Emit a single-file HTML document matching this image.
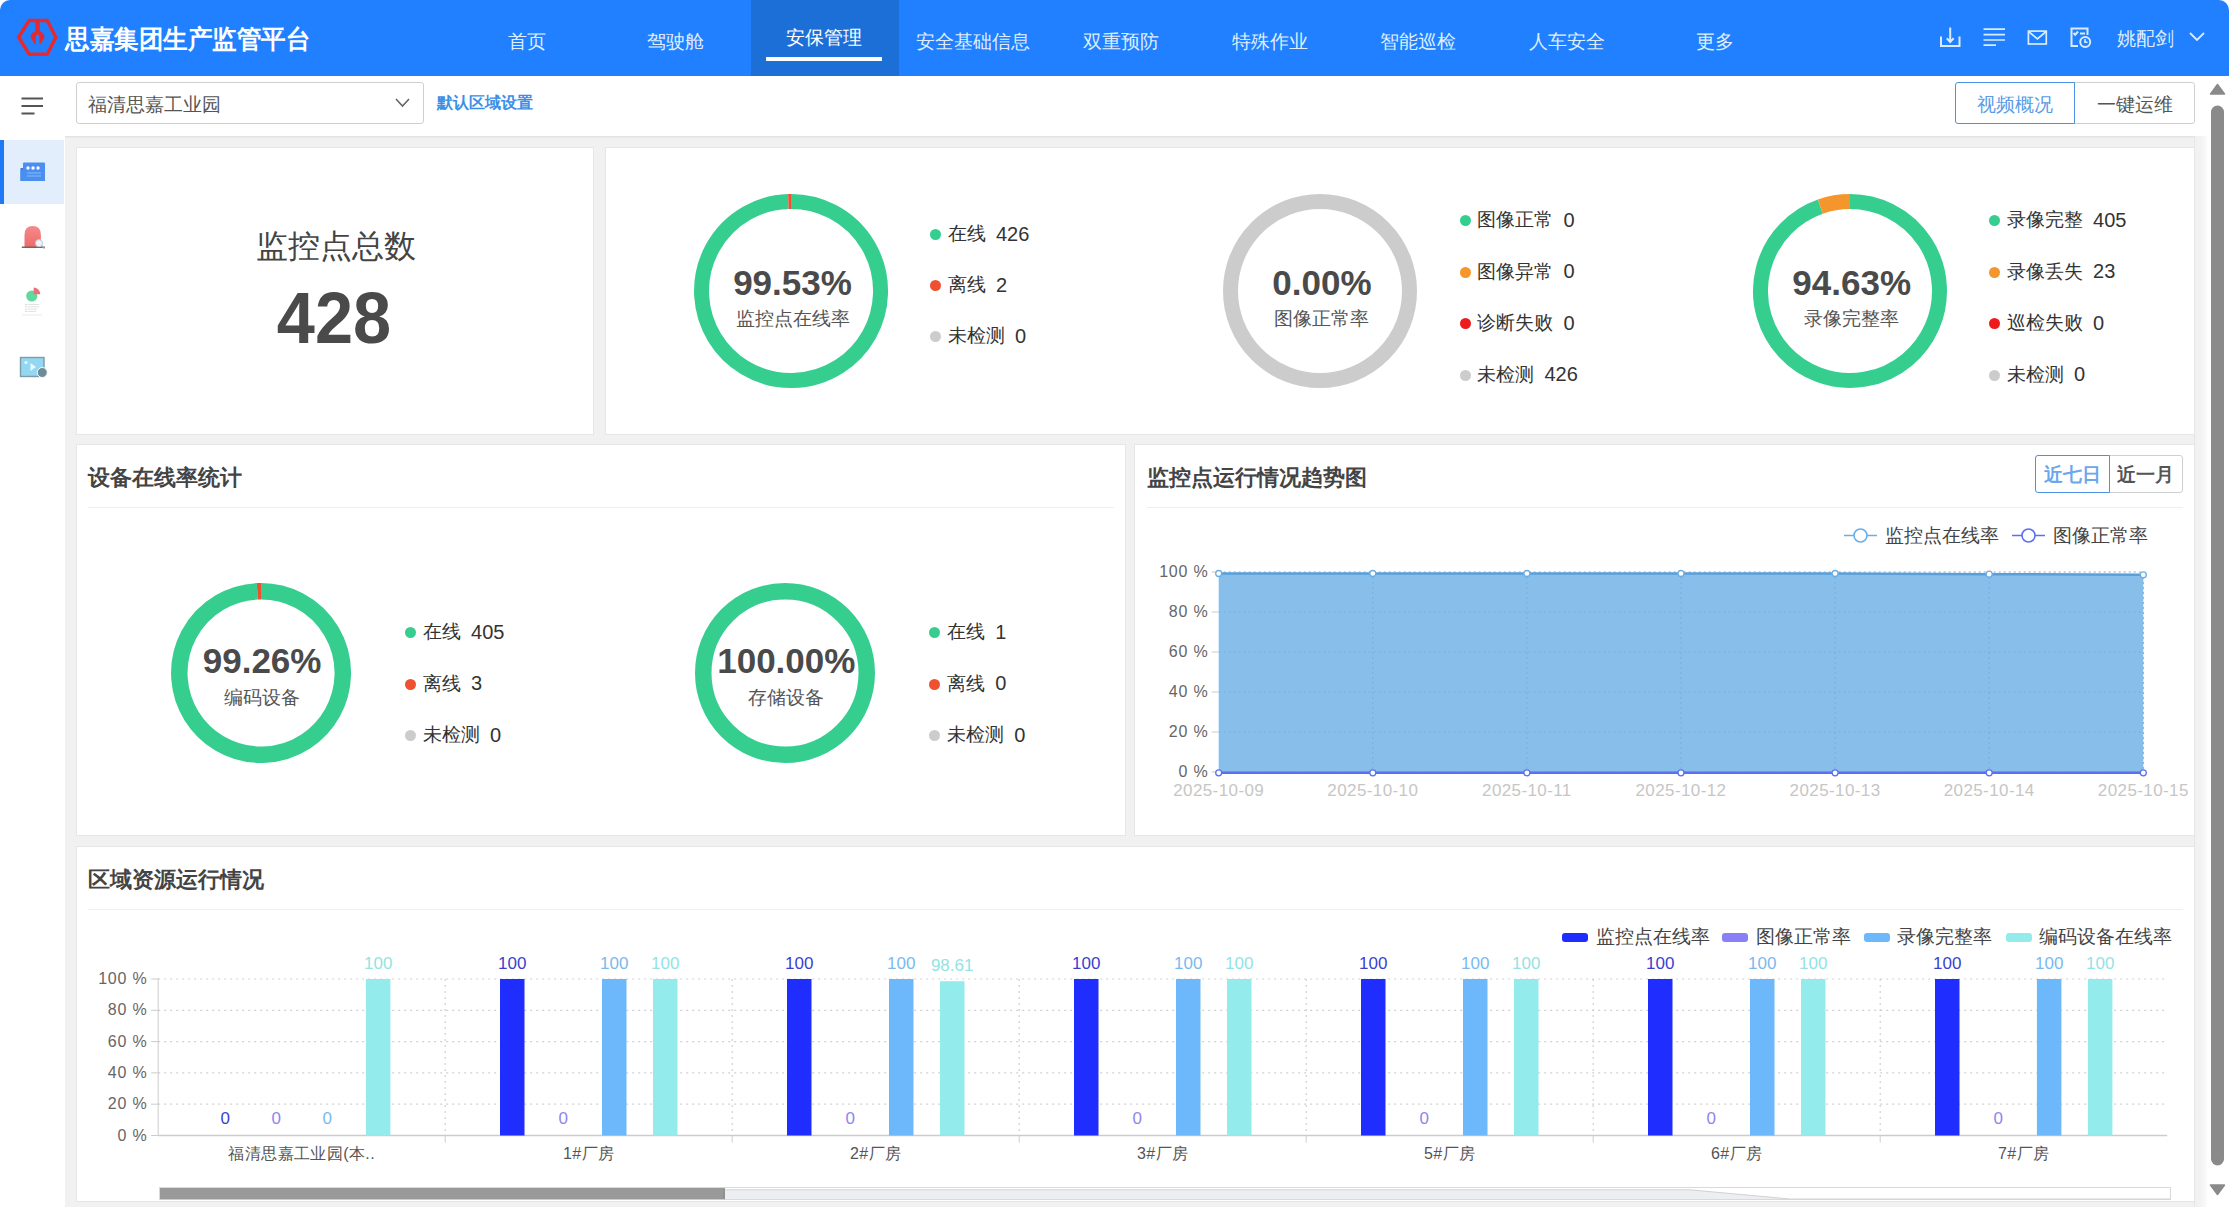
<!DOCTYPE html>
<html><head><meta charset="utf-8"><style>
html,body{margin:0;padding:0;width:2229px;height:1212px;overflow:hidden;background:#fff}
.win{position:absolute;left:0;top:0;width:2229px;height:1212px;overflow:hidden;border-radius:10px;font-family:"Liberation Sans", sans-serif}
.t{position:absolute;white-space:nowrap}
</style></head><body><div class="win">
<div style="position:absolute;left:0px;top:0px;width:2229px;height:1212px;background:#ffffff"></div><div style="position:absolute;left:0px;top:0px;width:2229px;height:76px;background:#2080ff"></div><div style="position:absolute;left:751px;top:0px;width:148px;height:76px;background:#1d6fd8"></div><div style="position:absolute;left:65px;top:136px;width:2142px;height:1071px;background:#f1f1f1"></div><div style="position:absolute;left:65px;top:136px;width:2142px;height:1px;background:#e3e3e3"></div><div style="position:absolute;left:65px;top:137px;width:2142px;height:1px;background:#eaeaea"></div><div style="position:absolute;left:76px;top:147px;width:518px;height:288px;background:#fff;border:1px solid #e6e6e6;box-sizing:border-box"></div><div style="position:absolute;left:605px;top:147px;width:1590px;height:288px;background:#fff;border:1px solid #e6e6e6;box-sizing:border-box"></div><div style="position:absolute;left:76px;top:444px;width:1050px;height:392px;background:#fff;border:1px solid #e6e6e6;box-sizing:border-box"></div><div style="position:absolute;left:1134px;top:444px;width:1061px;height:392px;background:#fff;border:1px solid #e6e6e6;box-sizing:border-box"></div><div style="position:absolute;left:76px;top:846px;width:2119px;height:356px;background:#fff;border:1px solid #e6e6e6;box-sizing:border-box"></div><div style="position:absolute;left:2194px;top:136px;width:1px;height:1071px;background:#e6e6e6"></div><div style="position:absolute;left:2195px;top:136px;width:12px;height:1071px;background:linear-gradient(90deg,#f1f1f1 0%,#f3f3f3 50%,#fbfbfb 100%)"></div><svg style="position:absolute;left:0;top:0" width="70" height="76" viewBox="0 0 70 76">
<polygon points="18.6,37.3 29.2,20.4 47.2,20.4 55.8,37.3 47.2,54.3 29.2,54.3" fill="none" stroke="#e52a2f" stroke-width="3.5" stroke-linejoin="miter"/>
<rect x="35.4" y="20" width="4.4" height="13" fill="#e52a2f"/>
<path d="M37.6,31 C33.2,31 30.4,34 30.6,37.6 L35,44.6 L35.8,44.6 L35.8,37.6 Q35.8,34.6 37.6,34.6 Q39.4,34.6 39.4,37.6 L39.4,44.6 L40.2,44.6 L44.6,37.6 C44.8,34 42,31 37.6,31 Z" fill="#e52a2f"/>
</svg><div class="t" style="left:65px;top:28.4px;font-size:24.4px;line-height:24.4px;color:#ffffff;font-weight:900;transform:scaleY(1.06);transform-origin:0 50%;letter-spacing:0.5px">思嘉集团生产监管平台</div><div class="t" style="left:27.0px;width:1000px;text-align:center;top:31.5px;font-size:19px;line-height:19px;color:#dfeeff;font-weight:normal;">首页</div><div class="t" style="left:175.5px;width:1000px;text-align:center;top:31.5px;font-size:19px;line-height:19px;color:#dfeeff;font-weight:normal;">驾驶舱</div><div class="t" style="left:324.0px;width:1000px;text-align:center;top:27.5px;font-size:19px;line-height:19px;color:#ffffff;font-weight:normal;">安保管理</div><div class="t" style="left:472.5px;width:1000px;text-align:center;top:31.5px;font-size:19px;line-height:19px;color:#dfeeff;font-weight:normal;">安全基础信息</div><div class="t" style="left:621.0px;width:1000px;text-align:center;top:31.5px;font-size:19px;line-height:19px;color:#dfeeff;font-weight:normal;">双重预防</div><div class="t" style="left:769.5px;width:1000px;text-align:center;top:31.5px;font-size:19px;line-height:19px;color:#dfeeff;font-weight:normal;">特殊作业</div><div class="t" style="left:918.0px;width:1000px;text-align:center;top:31.5px;font-size:19px;line-height:19px;color:#dfeeff;font-weight:normal;">智能巡检</div><div class="t" style="left:1066.5px;width:1000px;text-align:center;top:31.5px;font-size:19px;line-height:19px;color:#dfeeff;font-weight:normal;">人车安全</div><div class="t" style="left:1215.0px;width:1000px;text-align:center;top:31.5px;font-size:19px;line-height:19px;color:#dfeeff;font-weight:normal;">更多</div><div style="position:absolute;left:766px;top:56.5px;width:116px;height:4px;background:#ffffff"></div><svg style="position:absolute;left:1930;top:0" width="200" height="75" viewBox="1930 0 200 75" >
</svg><svg style="position:absolute;left:0;top:0" width="2229" height="75">
<g fill="none" stroke="#d9ecff" stroke-width="2">
<path d="M1941,36.5 V46 H1959.5 V36.5"/>
<path d="M1950.2,27.5 V42"/>
<path d="M1946.8,38.3 L1950.2,42 L1953.6,38.3"/>
<path d="M1983.5,29.2 H2005 M1983.5,34.6 H2005 M1983.5,40 H2005 M1983.5,45.2 H1996" stroke-width="1.7"/>
<rect x="2028.4" y="31.1" width="17.9" height="12.9" stroke-width="1.7"/>
<path d="M2028.6,31.5 L2037.4,39 L2046.2,31.5" stroke-width="1.7"/>
<path d="M2078,46 H2071.5 V28.5 H2087.5 V35"/>
<path d="M2073.5,33 L2075.2,34.8 L2078,31.5 M2080,33.5 H2085"/>
<circle cx="2085.2" cy="42" r="5"/>
<path d="M2085,39 V42.3 H2087.5" stroke-width="1.6"/>
<path d="M2190,33 L2197,40 L2204,33" stroke-width="1.8"/>
</g></svg><div class="t" style="left:2117px;top:28.5px;font-size:19px;line-height:19px;color:#dfeeff;font-weight:normal;">姚配剑</div><svg style="position:absolute;left:0;top:0" width="60" height="130">
<g stroke="#555" stroke-width="1.8" fill="none">
<path d="M21.5,98.5 H43 M21.5,106 H43 M21.5,113.5 H34.5"/></g></svg><div style="position:absolute;left:76px;top:82px;width:348px;height:42px;border:1px solid #cfcfcf;border-radius:3px;box-sizing:border-box;background:#fff"></div><div class="t" style="left:88px;top:94.5px;font-size:19px;line-height:19px;color:#555555;font-weight:normal;">福清思嘉工业园</div><svg style="position:absolute;left:0;top:0" width="430" height="130">
<path d="M396,99 L402.5,106 L409,99" stroke="#666" stroke-width="1.6" fill="none"/></svg><div class="t" style="left:437px;top:95.0px;font-size:16px;line-height:16px;color:#3d8fe6;font-weight:bold;">默认区域设置</div><div style="position:absolute;left:2073px;top:82px;width:122px;height:42px;border:1px solid #cfcfcf;border-radius:0 3px 3px 0;box-sizing:border-box;background:#fff"></div><div style="position:absolute;left:1955px;top:82px;width:120px;height:42px;border:1px solid #4d90e8;border-radius:3px 0 0 3px;box-sizing:border-box;background:#fff"></div><div class="t" style="left:1515px;width:1000px;text-align:center;top:95.0px;font-size:19px;line-height:19px;color:#5a9be6;font-weight:normal;">视频概况</div><div class="t" style="left:1634.5px;width:1000px;text-align:center;top:95.0px;font-size:19px;line-height:19px;color:#555555;font-weight:normal;">一键运维</div><div style="position:absolute;left:0px;top:140px;width:64px;height:64px;background:#e3eefd"></div><div style="position:absolute;left:0px;top:140px;width:4px;height:64px;background:#1f78f5"></div><svg style="position:absolute;left:0;top:0" width="64" height="400">
<rect x="20.5" y="168" width="6" height="13" fill="#3a7be0"/>
<rect x="23" y="162.5" width="22" height="18.5" rx="1" fill="#4a8ff0"/>
<rect x="20.5" y="170" width="24.5" height="11" fill="#4a8ff0"/>
<circle cx="28" cy="168" r="1.7" fill="#fff"/><circle cx="33" cy="168" r="1.7" fill="#fff"/><circle cx="38" cy="168" r="1.7" fill="#fff"/>
<path d="M27,173 H41 M27,176 H41" stroke="#9cc4f7" stroke-width="0.8"/>
<defs><linearGradient id="alg" x1="0" y1="0" x2="0" y2="1"><stop offset="0" stop-color="#f58a8a"/><stop offset="1" stop-color="#ee6a6a"/></linearGradient></defs>
<path d="M24.5,247 V235 Q24.5,226 32.7,226 Q40.9,226 40.9,235 V247 Z" fill="url(#alg)"/>
<path d="M21.8,247.2 H44.8" stroke="#7a6060" stroke-width="1.4"/>
<circle cx="39" cy="243.2" r="3.6" fill="#eef3f6" stroke="#b8c4cc" stroke-width="0.9"/>
<path d="M41.5,245.8 L44.5,248.6" stroke="#9aa6ae" stroke-width="1.2"/>
<circle cx="31.8" cy="296" r="5.6" fill="#62d99c"/>
<path d="M33.6,294.2 V287.6 A6.6,6.6 0 0 1 40.2,294.2 Z" fill="#ee6f7b"/>
<path d="M27.5,304.5 H39 M27.5,306.8 H39 M27.5,309.1 H37 M27.5,311.4 H36" stroke="#d9d9d9" stroke-width="0.8"/>
<path d="M25.5,304.5 H26.5 M25.5,306.8 H26.5 M25.5,309.1 H26.5 M25.5,311.4 H26.5" stroke="#aaaaaa" stroke-width="0.9"/>
<path d="M22,315 H42" stroke="#f0f0f0" stroke-width="1.5"/>
<rect x="20.5" y="357.5" width="23.5" height="19" fill="#93d7f2" stroke="#7e9ba8" stroke-width="1.4"/>
<path d="M30.5,363 L36,367 L30.5,371 Z" fill="#e8fbff"/>
<circle cx="26" cy="362.5" r="1.5" fill="#e8fbff"/>
<circle cx="42.3" cy="372.5" r="5" fill="#6f8b96" stroke="#fff" stroke-width="1"/>
</svg><svg style="position:absolute;left:0;top:0" width="2229" height="1212">
<path d="M2210.5,94 L2217.5,84.5 L2224.5,94 Z" fill="#8a8a8a" stroke="#8a8a8a" stroke-width="1.5" stroke-linejoin="round"/>
<rect x="2211" y="105.5" width="13" height="1060" rx="6.5" fill="#8a8a8a"/>
<path d="M2210.5,1185 L2217.5,1194.5 L2224.5,1185 Z" fill="#8a8a8a" stroke="#8a8a8a" stroke-width="1.5" stroke-linejoin="round"/>
</svg><div class="t" style="left:-164.5px;width:1000px;text-align:center;top:229.5px;font-size:32px;line-height:32px;color:#444444;font-weight:normal;">监控点总数</div><div class="t" style="left:-166px;width:1000px;text-align:center;top:285.1px;font-size:68.5px;line-height:68.5px;color:#4a4a4a;font-weight:bold;transform:scaleY(1.06)">428</div><svg style="position:absolute;left:692px;top:191.60000000000002px" width="198" height="198"><path d="M99.00,9.50 A89.5,89.5 0 1 1 96.37,9.54" fill="none" stroke="#36ce8f" stroke-width="15"/><path d="M96.37,9.54 A89.5,89.5 0 0 1 99.00,9.50" fill="none" stroke="#f0502f" stroke-width="15"/></svg><div class="t" style="left:292.5px;width:1000px;text-align:center;top:265.1px;font-size:35px;line-height:35px;color:#4a4a4a;font-weight:bold;">99.53%</div><div class="t" style="left:292.5px;width:1000px;text-align:center;top:309.1px;font-size:19px;line-height:19px;color:#555555;font-weight:normal;">监控点在线率</div><div style="position:absolute;left:930.0px;top:229.0px;width:11px;height:11px;border-radius:50%;background:#36ce8f"></div><div class="t" style="left:947.5px;top:224.0px;font-size:19px;line-height:19px;color:#333333;font-weight:normal;">在线</div><div class="t" style="left:996.0px;top:223.5px;font-size:20px;line-height:20px;color:#333333;font-weight:normal;">426</div><div style="position:absolute;left:930.0px;top:280.0px;width:11px;height:11px;border-radius:50%;background:#f0502f"></div><div class="t" style="left:947.5px;top:275.0px;font-size:19px;line-height:19px;color:#333333;font-weight:normal;">离线</div><div class="t" style="left:996.0px;top:274.5px;font-size:20px;line-height:20px;color:#333333;font-weight:normal;">2</div><div style="position:absolute;left:930.0px;top:331.0px;width:11px;height:11px;border-radius:50%;background:#cccccc"></div><div class="t" style="left:947.5px;top:326.0px;font-size:19px;line-height:19px;color:#333333;font-weight:normal;">未检测</div><div class="t" style="left:1015.0px;top:325.5px;font-size:20px;line-height:20px;color:#333333;font-weight:normal;">0</div><svg style="position:absolute;left:1221.4px;top:191.60000000000002px" width="198" height="198"><circle cx="99" cy="99" r="89.5" fill="none" stroke="#cccccc" stroke-width="15"/></svg><div class="t" style="left:821.9000000000001px;width:1000px;text-align:center;top:265.1px;font-size:35px;line-height:35px;color:#4a4a4a;font-weight:bold;">0.00%</div><div class="t" style="left:821.9000000000001px;width:1000px;text-align:center;top:309.1px;font-size:19px;line-height:19px;color:#555555;font-weight:normal;">图像正常率</div><div style="position:absolute;left:1459.5px;top:215.0px;width:11px;height:11px;border-radius:50%;background:#36ce8f"></div><div class="t" style="left:1477px;top:210.0px;font-size:19px;line-height:19px;color:#333333;font-weight:normal;">图像正常</div><div class="t" style="left:1563.5px;top:209.5px;font-size:20px;line-height:20px;color:#333333;font-weight:normal;">0</div><div style="position:absolute;left:1459.5px;top:266.5px;width:11px;height:11px;border-radius:50%;background:#f5962c"></div><div class="t" style="left:1477px;top:261.5px;font-size:19px;line-height:19px;color:#333333;font-weight:normal;">图像异常</div><div class="t" style="left:1563.5px;top:261.0px;font-size:20px;line-height:20px;color:#333333;font-weight:normal;">0</div><div style="position:absolute;left:1459.5px;top:318.0px;width:11px;height:11px;border-radius:50%;background:#ee1b1b"></div><div class="t" style="left:1477px;top:313.0px;font-size:19px;line-height:19px;color:#333333;font-weight:normal;">诊断失败</div><div class="t" style="left:1563.5px;top:312.5px;font-size:20px;line-height:20px;color:#333333;font-weight:normal;">0</div><div style="position:absolute;left:1459.5px;top:369.5px;width:11px;height:11px;border-radius:50%;background:#cccccc"></div><div class="t" style="left:1477px;top:364.5px;font-size:19px;line-height:19px;color:#333333;font-weight:normal;">未检测</div><div class="t" style="left:1544.5px;top:364.0px;font-size:20px;line-height:20px;color:#333333;font-weight:normal;">426</div><svg style="position:absolute;left:1751.2px;top:191.60000000000002px" width="198" height="198"><path d="M99.00,9.50 A89.5,89.5 0 1 1 69.35,14.55" fill="none" stroke="#36ce8f" stroke-width="15"/><path d="M69.35,14.55 A89.5,89.5 0 0 1 99.00,9.50" fill="none" stroke="#f5962c" stroke-width="15"/></svg><div class="t" style="left:1351.7px;width:1000px;text-align:center;top:265.1px;font-size:35px;line-height:35px;color:#4a4a4a;font-weight:bold;">94.63%</div><div class="t" style="left:1351.7px;width:1000px;text-align:center;top:309.1px;font-size:19px;line-height:19px;color:#555555;font-weight:normal;">录像完整率</div><div style="position:absolute;left:1989.1px;top:215.0px;width:11px;height:11px;border-radius:50%;background:#36ce8f"></div><div class="t" style="left:2006.6px;top:210.0px;font-size:19px;line-height:19px;color:#333333;font-weight:normal;">录像完整</div><div class="t" style="left:2093.1px;top:209.5px;font-size:20px;line-height:20px;color:#333333;font-weight:normal;">405</div><div style="position:absolute;left:1989.1px;top:266.5px;width:11px;height:11px;border-radius:50%;background:#f5962c"></div><div class="t" style="left:2006.6px;top:261.5px;font-size:19px;line-height:19px;color:#333333;font-weight:normal;">录像丢失</div><div class="t" style="left:2093.1px;top:261.0px;font-size:20px;line-height:20px;color:#333333;font-weight:normal;">23</div><div style="position:absolute;left:1989.1px;top:318.0px;width:11px;height:11px;border-radius:50%;background:#ee1b1b"></div><div class="t" style="left:2006.6px;top:313.0px;font-size:19px;line-height:19px;color:#333333;font-weight:normal;">巡检失败</div><div class="t" style="left:2093.1px;top:312.5px;font-size:20px;line-height:20px;color:#333333;font-weight:normal;">0</div><div style="position:absolute;left:1989.1px;top:369.5px;width:11px;height:11px;border-radius:50%;background:#cccccc"></div><div class="t" style="left:2006.6px;top:364.5px;font-size:19px;line-height:19px;color:#333333;font-weight:normal;">未检测</div><div class="t" style="left:2074.1px;top:364.0px;font-size:20px;line-height:20px;color:#333333;font-weight:normal;">0</div><div class="t" style="left:88px;top:467.0px;font-size:22px;line-height:22px;color:#444444;font-weight:900;">设备在线率统计</div><div style="position:absolute;left:88px;top:507px;width:1026px;height:1px;background:#efefef"></div><svg style="position:absolute;left:168.60000000000002px;top:580.7px" width="184" height="184"><path d="M92.00,10.25 A81.75,81.75 0 1 1 88.22,10.34" fill="none" stroke="#36ce8f" stroke-width="16.5"/><path d="M88.22,10.34 A81.75,81.75 0 0 1 92.00,10.25" fill="none" stroke="#f0502f" stroke-width="16.5"/></svg><div class="t" style="left:-237.89999999999998px;width:1000px;text-align:center;top:642.7px;font-size:35px;line-height:35px;color:#4a4a4a;font-weight:bold;">99.26%</div><div class="t" style="left:-237.89999999999998px;width:1000px;text-align:center;top:687.7px;font-size:19px;line-height:19px;color:#555555;font-weight:normal;">编码设备</div><div style="position:absolute;left:405.1px;top:627.0px;width:11px;height:11px;border-radius:50%;background:#36ce8f"></div><div class="t" style="left:422.6px;top:622.0px;font-size:19px;line-height:19px;color:#333333;font-weight:normal;">在线</div><div class="t" style="left:471.1px;top:621.5px;font-size:20px;line-height:20px;color:#333333;font-weight:normal;">405</div><div style="position:absolute;left:405.1px;top:678.5px;width:11px;height:11px;border-radius:50%;background:#f0502f"></div><div class="t" style="left:422.6px;top:673.5px;font-size:19px;line-height:19px;color:#333333;font-weight:normal;">离线</div><div class="t" style="left:471.1px;top:673.0px;font-size:20px;line-height:20px;color:#333333;font-weight:normal;">3</div><div style="position:absolute;left:405.1px;top:730.0px;width:11px;height:11px;border-radius:50%;background:#cccccc"></div><div class="t" style="left:422.6px;top:725.0px;font-size:19px;line-height:19px;color:#333333;font-weight:normal;">未检测</div><div class="t" style="left:490.1px;top:724.5px;font-size:20px;line-height:20px;color:#333333;font-weight:normal;">0</div><svg style="position:absolute;left:692.8px;top:581px" width="184" height="184"><circle cx="92" cy="92" r="81.75" fill="none" stroke="#36ce8f" stroke-width="16.5"/></svg><div class="t" style="left:286.29999999999995px;width:1000px;text-align:center;top:643.0px;font-size:35px;line-height:35px;color:#4a4a4a;font-weight:bold;">100.00%</div><div class="t" style="left:286.29999999999995px;width:1000px;text-align:center;top:688.0px;font-size:19px;line-height:19px;color:#555555;font-weight:normal;">存储设备</div><div style="position:absolute;left:929.2px;top:627.0px;width:11px;height:11px;border-radius:50%;background:#36ce8f"></div><div class="t" style="left:946.7px;top:622.0px;font-size:19px;line-height:19px;color:#333333;font-weight:normal;">在线</div><div class="t" style="left:995.2px;top:621.5px;font-size:20px;line-height:20px;color:#333333;font-weight:normal;">1</div><div style="position:absolute;left:929.2px;top:678.5px;width:11px;height:11px;border-radius:50%;background:#f0502f"></div><div class="t" style="left:946.7px;top:673.5px;font-size:19px;line-height:19px;color:#333333;font-weight:normal;">离线</div><div class="t" style="left:995.2px;top:673.0px;font-size:20px;line-height:20px;color:#333333;font-weight:normal;">0</div><div style="position:absolute;left:929.2px;top:730.0px;width:11px;height:11px;border-radius:50%;background:#cccccc"></div><div class="t" style="left:946.7px;top:725.0px;font-size:19px;line-height:19px;color:#333333;font-weight:normal;">未检测</div><div class="t" style="left:1014.2px;top:724.5px;font-size:20px;line-height:20px;color:#333333;font-weight:normal;">0</div><div class="t" style="left:1147px;top:467.0px;font-size:22px;line-height:22px;color:#444444;font-weight:900;">监控点运行情况趋势图</div><div style="position:absolute;left:1147px;top:507px;width:1036px;height:1px;background:#efefef"></div><div style="position:absolute;left:2108px;top:455px;width:74.5px;height:37.5px;border:1px solid #cfcfcf;border-radius:0 3px 3px 0;box-sizing:border-box;background:#fff"></div><div style="position:absolute;left:2035px;top:455px;width:75px;height:37.5px;border:1px solid #4d90e8;border-radius:3px 0 0 3px;box-sizing:border-box;background:#fff"></div><div class="t" style="left:1572px;width:1000px;text-align:center;top:465.0px;font-size:19px;line-height:19px;color:#6aa7ee;font-weight:900;">近七日</div><div class="t" style="left:1645.5px;width:1000px;text-align:center;top:465.0px;font-size:19px;line-height:19px;color:#555555;font-weight:900;">近一月</div><svg style="position:absolute;left:0;top:0" width="2229" height="600">
<path d="M1844,535.5 H1877" stroke="#6aaee6" stroke-width="1.6"/>
<circle cx="1860.5" cy="535.5" r="6.5" fill="#fff" stroke="#6aaee6" stroke-width="1.6"/>
<path d="M2012,535.5 H2045" stroke="#5c6ff0" stroke-width="1.6"/>
<circle cx="2028.5" cy="535.5" r="6.5" fill="#fff" stroke="#5c6ff0" stroke-width="1.6"/>
</svg><div class="t" style="left:1885px;top:525.5px;font-size:19px;line-height:19px;color:#444444;font-weight:normal;">监控点在线率</div><div class="t" style="left:2052.5px;top:525.5px;font-size:19px;line-height:19px;color:#444444;font-weight:normal;">图像正常率</div><svg style="position:absolute;left:0;top:0" width="2229" height="820"><polygon points="1218.7,573.5 1372.8,573.5 1526.9,573.5 1681.0,573.5 1835.1,573.5 1989.2,574.2 2143.3,574.8 2143.3,772 1218.7,772" fill="#88bfea"/><path d="M1218.7,572 H2143.3" stroke="#78aedb" stroke-width="1" stroke-dasharray="2,3"/><path d="M1211.7,572 H1218.7" stroke="#cccccc" stroke-width="1"/><path d="M1218.7,612 H2143.3" stroke="#78aedb" stroke-width="1" stroke-dasharray="2,3"/><path d="M1211.7,612 H1218.7" stroke="#cccccc" stroke-width="1"/><path d="M1218.7,652 H2143.3" stroke="#78aedb" stroke-width="1" stroke-dasharray="2,3"/><path d="M1211.7,652 H1218.7" stroke="#cccccc" stroke-width="1"/><path d="M1218.7,692 H2143.3" stroke="#78aedb" stroke-width="1" stroke-dasharray="2,3"/><path d="M1211.7,692 H1218.7" stroke="#cccccc" stroke-width="1"/><path d="M1218.7,732 H2143.3" stroke="#78aedb" stroke-width="1" stroke-dasharray="2,3"/><path d="M1211.7,732 H1218.7" stroke="#cccccc" stroke-width="1"/><path d="M1218.7,772 H2143.3" stroke="#78aedb" stroke-width="1" stroke-dasharray="2,3"/><path d="M1211.7,772 H1218.7" stroke="#cccccc" stroke-width="1"/><path d="M1372.8,572 V772" stroke="#78aedb" stroke-width="1" stroke-dasharray="2,3"/><path d="M1526.9,572 V772" stroke="#78aedb" stroke-width="1" stroke-dasharray="2,3"/><path d="M1681.0,572 V772" stroke="#78aedb" stroke-width="1" stroke-dasharray="2,3"/><path d="M1835.1,572 V772" stroke="#78aedb" stroke-width="1" stroke-dasharray="2,3"/><path d="M1989.2,572 V772" stroke="#78aedb" stroke-width="1" stroke-dasharray="2,3"/><path d="M2143.3,572 V772" stroke="#78aedb" stroke-width="1" stroke-dasharray="2,3"/><path d="M1218.7,573.5 L1372.8,573.5 L1526.9,573.5 L1681.0,573.5 L1835.1,573.5 L1989.2,574.2 L2143.3,574.8" fill="none" stroke="#5a9fd8" stroke-width="2.5"/><path d="M1218.7,772.8 H2143.3" stroke="#5c6ff0" stroke-width="2.5"/><circle cx="1218.7" cy="573.5" r="3" fill="#fff" stroke="#6aaee6" stroke-width="1.3"/><circle cx="1218.7" cy="772.8" r="3" fill="#fff" stroke="#5c6ff0" stroke-width="1.3"/><circle cx="1372.8" cy="573.5" r="3" fill="#fff" stroke="#6aaee6" stroke-width="1.3"/><circle cx="1372.8" cy="772.8" r="3" fill="#fff" stroke="#5c6ff0" stroke-width="1.3"/><circle cx="1526.9" cy="573.5" r="3" fill="#fff" stroke="#6aaee6" stroke-width="1.3"/><circle cx="1526.9" cy="772.8" r="3" fill="#fff" stroke="#5c6ff0" stroke-width="1.3"/><circle cx="1681.0" cy="573.5" r="3" fill="#fff" stroke="#6aaee6" stroke-width="1.3"/><circle cx="1681.0" cy="772.8" r="3" fill="#fff" stroke="#5c6ff0" stroke-width="1.3"/><circle cx="1835.1" cy="573.5" r="3" fill="#fff" stroke="#6aaee6" stroke-width="1.3"/><circle cx="1835.1" cy="772.8" r="3" fill="#fff" stroke="#5c6ff0" stroke-width="1.3"/><circle cx="1989.2" cy="574.2" r="3" fill="#fff" stroke="#6aaee6" stroke-width="1.3"/><circle cx="1989.2" cy="772.8" r="3" fill="#fff" stroke="#5c6ff0" stroke-width="1.3"/><circle cx="2143.3" cy="574.8" r="3" fill="#fff" stroke="#6aaee6" stroke-width="1.3"/><circle cx="2143.3" cy="772.8" r="3" fill="#fff" stroke="#5c6ff0" stroke-width="1.3"/></svg><div class="t" style="left:208.5px;width:1000px;text-align:right;top:564.0px;font-size:16px;line-height:16px;color:#666666;font-weight:normal;letter-spacing:0.8px">100 %</div><div class="t" style="left:208.5px;width:1000px;text-align:right;top:604.0px;font-size:16px;line-height:16px;color:#666666;font-weight:normal;letter-spacing:0.8px">80 %</div><div class="t" style="left:208.5px;width:1000px;text-align:right;top:644.0px;font-size:16px;line-height:16px;color:#666666;font-weight:normal;letter-spacing:0.8px">60 %</div><div class="t" style="left:208.5px;width:1000px;text-align:right;top:684.0px;font-size:16px;line-height:16px;color:#666666;font-weight:normal;letter-spacing:0.8px">40 %</div><div class="t" style="left:208.5px;width:1000px;text-align:right;top:724.0px;font-size:16px;line-height:16px;color:#666666;font-weight:normal;letter-spacing:0.8px">20 %</div><div class="t" style="left:208.5px;width:1000px;text-align:right;top:764.0px;font-size:16px;line-height:16px;color:#666666;font-weight:normal;letter-spacing:0.8px">0 %</div><div class="t" style="left:718.7px;width:1000px;text-align:center;top:781.5px;font-size:17px;line-height:17px;color:#c6c6c6;font-weight:normal;letter-spacing:0.4px">2025-10-09</div><div class="t" style="left:872.8px;width:1000px;text-align:center;top:781.5px;font-size:17px;line-height:17px;color:#c6c6c6;font-weight:normal;letter-spacing:0.4px">2025-10-10</div><div class="t" style="left:1026.9px;width:1000px;text-align:center;top:781.5px;font-size:17px;line-height:17px;color:#c6c6c6;font-weight:normal;letter-spacing:0.4px">2025-10-11</div><div class="t" style="left:1181.0px;width:1000px;text-align:center;top:781.5px;font-size:17px;line-height:17px;color:#c6c6c6;font-weight:normal;letter-spacing:0.4px">2025-10-12</div><div class="t" style="left:1335.1px;width:1000px;text-align:center;top:781.5px;font-size:17px;line-height:17px;color:#c6c6c6;font-weight:normal;letter-spacing:0.4px">2025-10-13</div><div class="t" style="left:1489.2px;width:1000px;text-align:center;top:781.5px;font-size:17px;line-height:17px;color:#c6c6c6;font-weight:normal;letter-spacing:0.4px">2025-10-14</div><div class="t" style="left:1643.3000000000002px;width:1000px;text-align:center;top:781.5px;font-size:17px;line-height:17px;color:#c6c6c6;font-weight:normal;letter-spacing:0.4px">2025-10-15</div><div class="t" style="left:88px;top:868.5px;font-size:22px;line-height:22px;color:#444444;font-weight:900;">区域资源运行情况</div><div style="position:absolute;left:88px;top:909px;width:2095px;height:1px;background:#efefef"></div><div style="position:absolute;left:1562px;top:933px;width:26px;height:9px;background:#1f2dff;border-radius:3px"></div><div class="t" style="left:1595.8px;top:927.0px;font-size:19px;line-height:19px;color:#444444;font-weight:normal;">监控点在线率</div><div style="position:absolute;left:1722px;top:933px;width:26px;height:9px;background:#8a80f6;border-radius:3px"></div><div class="t" style="left:1755.8px;top:927.0px;font-size:19px;line-height:19px;color:#444444;font-weight:normal;">图像正常率</div><div style="position:absolute;left:1864px;top:933px;width:26px;height:9px;background:#6db8fb;border-radius:3px"></div><div class="t" style="left:1897.3px;top:927.0px;font-size:19px;line-height:19px;color:#444444;font-weight:normal;">录像完整率</div><div style="position:absolute;left:2006.4px;top:933px;width:26px;height:9px;background:#93ebeb;border-radius:3px"></div><div class="t" style="left:2039.3px;top:927.0px;font-size:19px;line-height:19px;color:#444444;font-weight:normal;">编码设备在线率</div><svg style="position:absolute;left:0;top:0" width="2229" height="1212"><path d="M158.2,979.0 H2167.2" stroke="#d0d0d0" stroke-width="1.2" stroke-dasharray="2,4"/><path d="M151.2,979.0 H158.2" stroke="#cccccc" stroke-width="1"/><path d="M158.2,1010.3 H2167.2" stroke="#d0d0d0" stroke-width="1.2" stroke-dasharray="2,4"/><path d="M151.2,1010.3 H158.2" stroke="#cccccc" stroke-width="1"/><path d="M158.2,1041.6 H2167.2" stroke="#d0d0d0" stroke-width="1.2" stroke-dasharray="2,4"/><path d="M151.2,1041.6 H158.2" stroke="#cccccc" stroke-width="1"/><path d="M158.2,1072.9 H2167.2" stroke="#d0d0d0" stroke-width="1.2" stroke-dasharray="2,4"/><path d="M151.2,1072.9 H158.2" stroke="#cccccc" stroke-width="1"/><path d="M158.2,1104.2 H2167.2" stroke="#d0d0d0" stroke-width="1.2" stroke-dasharray="2,4"/><path d="M151.2,1104.2 H158.2" stroke="#cccccc" stroke-width="1"/><path d="M151.2,1135.5 H158.2" stroke="#cccccc" stroke-width="1"/><path d="M445.2,979 V1135.5" stroke="#d0d0d0" stroke-width="1.2" stroke-dasharray="2,4"/><path d="M445.2,1135.5 V1142.5" stroke="#cccccc" stroke-width="1"/><path d="M732.2,979 V1135.5" stroke="#d0d0d0" stroke-width="1.2" stroke-dasharray="2,4"/><path d="M732.2,1135.5 V1142.5" stroke="#cccccc" stroke-width="1"/><path d="M1019.2,979 V1135.5" stroke="#d0d0d0" stroke-width="1.2" stroke-dasharray="2,4"/><path d="M1019.2,1135.5 V1142.5" stroke="#cccccc" stroke-width="1"/><path d="M1306.2,979 V1135.5" stroke="#d0d0d0" stroke-width="1.2" stroke-dasharray="2,4"/><path d="M1306.2,1135.5 V1142.5" stroke="#cccccc" stroke-width="1"/><path d="M1593.2,979 V1135.5" stroke="#d0d0d0" stroke-width="1.2" stroke-dasharray="2,4"/><path d="M1593.2,1135.5 V1142.5" stroke="#cccccc" stroke-width="1"/><path d="M1880.2,979 V1135.5" stroke="#d0d0d0" stroke-width="1.2" stroke-dasharray="2,4"/><path d="M1880.2,1135.5 V1142.5" stroke="#cccccc" stroke-width="1"/><path d="M158.2,978 V1135.5" stroke="#cccccc" stroke-width="1"/><path d="M158.2,1135.5 H2167.2" stroke="#cccccc" stroke-width="1.5"/><rect x="365.9" y="979.0" width="24.5" height="156.5" fill="#93ebeb"/><rect x="500.0" y="979.0" width="24.5" height="156.5" fill="#1f2dff"/><rect x="602.0" y="979.0" width="24.5" height="156.5" fill="#6db8fb"/><rect x="653.0" y="979.0" width="24.5" height="156.5" fill="#93ebeb"/><rect x="787.0" y="979.0" width="24.5" height="156.5" fill="#1f2dff"/><rect x="889.0" y="979.0" width="24.5" height="156.5" fill="#6db8fb"/><rect x="940.0" y="981.2" width="24.5" height="154.3" fill="#93ebeb"/><rect x="1074.0" y="979.0" width="24.5" height="156.5" fill="#1f2dff"/><rect x="1176.0" y="979.0" width="24.5" height="156.5" fill="#6db8fb"/><rect x="1227.0" y="979.0" width="24.5" height="156.5" fill="#93ebeb"/><rect x="1361.0" y="979.0" width="24.5" height="156.5" fill="#1f2dff"/><rect x="1463.0" y="979.0" width="24.5" height="156.5" fill="#6db8fb"/><rect x="1514.0" y="979.0" width="24.5" height="156.5" fill="#93ebeb"/><rect x="1648.0" y="979.0" width="24.5" height="156.5" fill="#1f2dff"/><rect x="1750.0" y="979.0" width="24.5" height="156.5" fill="#6db8fb"/><rect x="1801.0" y="979.0" width="24.5" height="156.5" fill="#93ebeb"/><rect x="1935.0" y="979.0" width="24.5" height="156.5" fill="#1f2dff"/><rect x="2036.9" y="979.0" width="24.5" height="156.5" fill="#6db8fb"/><rect x="2087.9" y="979.0" width="24.5" height="156.5" fill="#93ebeb"/></svg><div class="t" style="left:-274.8px;width:1000px;text-align:center;top:1110.0px;font-size:17px;line-height:17px;color:#3a3fd0;font-weight:normal;">0</div><div class="t" style="left:-223.8px;width:1000px;text-align:center;top:1110.0px;font-size:17px;line-height:17px;color:#8f85ee;font-weight:normal;">0</div><div class="t" style="left:-172.8px;width:1000px;text-align:center;top:1110.0px;font-size:17px;line-height:17px;color:#7ab9f0;font-weight:normal;">0</div><div class="t" style="left:-121.80000000000001px;width:1000px;text-align:center;top:954.5px;font-size:17px;line-height:17px;color:#93e3e3;font-weight:normal;">100</div><div class="t" style="left:12.200000000000045px;width:1000px;text-align:center;top:954.5px;font-size:17px;line-height:17px;color:#3a3fd0;font-weight:normal;">100</div><div class="t" style="left:63.200000000000045px;width:1000px;text-align:center;top:1110.0px;font-size:17px;line-height:17px;color:#8f85ee;font-weight:normal;">0</div><div class="t" style="left:114.20000000000005px;width:1000px;text-align:center;top:954.5px;font-size:17px;line-height:17px;color:#7ab9f0;font-weight:normal;">100</div><div class="t" style="left:165.20000000000005px;width:1000px;text-align:center;top:954.5px;font-size:17px;line-height:17px;color:#93e3e3;font-weight:normal;">100</div><div class="t" style="left:299.20000000000005px;width:1000px;text-align:center;top:954.5px;font-size:17px;line-height:17px;color:#3a3fd0;font-weight:normal;">100</div><div class="t" style="left:350.20000000000005px;width:1000px;text-align:center;top:1110.0px;font-size:17px;line-height:17px;color:#8f85ee;font-weight:normal;">0</div><div class="t" style="left:401.20000000000005px;width:1000px;text-align:center;top:954.5px;font-size:17px;line-height:17px;color:#7ab9f0;font-weight:normal;">100</div><div class="t" style="left:452.20000000000005px;width:1000px;text-align:center;top:956.7px;font-size:17px;line-height:17px;color:#93e3e3;font-weight:normal;">98.61</div><div class="t" style="left:586.2px;width:1000px;text-align:center;top:954.5px;font-size:17px;line-height:17px;color:#3a3fd0;font-weight:normal;">100</div><div class="t" style="left:637.2px;width:1000px;text-align:center;top:1110.0px;font-size:17px;line-height:17px;color:#8f85ee;font-weight:normal;">0</div><div class="t" style="left:688.2px;width:1000px;text-align:center;top:954.5px;font-size:17px;line-height:17px;color:#7ab9f0;font-weight:normal;">100</div><div class="t" style="left:739.2px;width:1000px;text-align:center;top:954.5px;font-size:17px;line-height:17px;color:#93e3e3;font-weight:normal;">100</div><div class="t" style="left:873.2px;width:1000px;text-align:center;top:954.5px;font-size:17px;line-height:17px;color:#3a3fd0;font-weight:normal;">100</div><div class="t" style="left:924.2px;width:1000px;text-align:center;top:1110.0px;font-size:17px;line-height:17px;color:#8f85ee;font-weight:normal;">0</div><div class="t" style="left:975.2px;width:1000px;text-align:center;top:954.5px;font-size:17px;line-height:17px;color:#7ab9f0;font-weight:normal;">100</div><div class="t" style="left:1026.2px;width:1000px;text-align:center;top:954.5px;font-size:17px;line-height:17px;color:#93e3e3;font-weight:normal;">100</div><div class="t" style="left:1160.2px;width:1000px;text-align:center;top:954.5px;font-size:17px;line-height:17px;color:#3a3fd0;font-weight:normal;">100</div><div class="t" style="left:1211.2px;width:1000px;text-align:center;top:1110.0px;font-size:17px;line-height:17px;color:#8f85ee;font-weight:normal;">0</div><div class="t" style="left:1262.2px;width:1000px;text-align:center;top:954.5px;font-size:17px;line-height:17px;color:#7ab9f0;font-weight:normal;">100</div><div class="t" style="left:1313.2px;width:1000px;text-align:center;top:954.5px;font-size:17px;line-height:17px;color:#93e3e3;font-weight:normal;">100</div><div class="t" style="left:1447.2px;width:1000px;text-align:center;top:954.5px;font-size:17px;line-height:17px;color:#3a3fd0;font-weight:normal;">100</div><div class="t" style="left:1498.2px;width:1000px;text-align:center;top:1110.0px;font-size:17px;line-height:17px;color:#8f85ee;font-weight:normal;">0</div><div class="t" style="left:1549.1999999999998px;width:1000px;text-align:center;top:954.5px;font-size:17px;line-height:17px;color:#7ab9f0;font-weight:normal;">100</div><div class="t" style="left:1600.1999999999998px;width:1000px;text-align:center;top:954.5px;font-size:17px;line-height:17px;color:#93e3e3;font-weight:normal;">100</div><div class="t" style="left:-852.5px;width:1000px;text-align:right;top:971.0px;font-size:16px;line-height:16px;color:#666666;font-weight:normal;letter-spacing:0.8px">100 %</div><div class="t" style="left:-852.5px;width:1000px;text-align:right;top:1002.3px;font-size:16px;line-height:16px;color:#666666;font-weight:normal;letter-spacing:0.8px">80 %</div><div class="t" style="left:-852.5px;width:1000px;text-align:right;top:1033.6px;font-size:16px;line-height:16px;color:#666666;font-weight:normal;letter-spacing:0.8px">60 %</div><div class="t" style="left:-852.5px;width:1000px;text-align:right;top:1064.9px;font-size:16px;line-height:16px;color:#666666;font-weight:normal;letter-spacing:0.8px">40 %</div><div class="t" style="left:-852.5px;width:1000px;text-align:right;top:1096.2px;font-size:16px;line-height:16px;color:#666666;font-weight:normal;letter-spacing:0.8px">20 %</div><div class="t" style="left:-852.5px;width:1000px;text-align:right;top:1127.5px;font-size:16px;line-height:16px;color:#666666;font-weight:normal;letter-spacing:0.8px">0 %</div><div class="t" style="left:-198.3px;width:1000px;text-align:center;top:1146.0px;font-size:16px;line-height:16px;color:#555555;font-weight:normal;letter-spacing:0.4px">福清思嘉工业园(本..</div><div class="t" style="left:88.70000000000005px;width:1000px;text-align:center;top:1146.0px;font-size:16px;line-height:16px;color:#555555;font-weight:normal;letter-spacing:0.4px">1#厂房</div><div class="t" style="left:375.70000000000005px;width:1000px;text-align:center;top:1146.0px;font-size:16px;line-height:16px;color:#555555;font-weight:normal;letter-spacing:0.4px">2#厂房</div><div class="t" style="left:662.7px;width:1000px;text-align:center;top:1146.0px;font-size:16px;line-height:16px;color:#555555;font-weight:normal;letter-spacing:0.4px">3#厂房</div><div class="t" style="left:949.7px;width:1000px;text-align:center;top:1146.0px;font-size:16px;line-height:16px;color:#555555;font-weight:normal;letter-spacing:0.4px">5#厂房</div><div class="t" style="left:1236.7px;width:1000px;text-align:center;top:1146.0px;font-size:16px;line-height:16px;color:#555555;font-weight:normal;letter-spacing:0.4px">6#厂房</div><div class="t" style="left:1523.7px;width:1000px;text-align:center;top:1146.0px;font-size:16px;line-height:16px;color:#555555;font-weight:normal;letter-spacing:0.4px">7#厂房</div><svg style="position:absolute;left:0;top:0" width="2229" height="1212">
<rect x="159.5" y="1187.5" width="2011" height="12" fill="#ffffff" stroke="#d9d9d9" stroke-width="1"/>
<path d="M160,1189.8 H1690 L1790,1199 H160 Z" fill="#eceef1"/>
<path d="M160,1189.8 H1690 L1790,1199 H2170" fill="none" stroke="#d2d2d2" stroke-width="1"/>
<rect x="160" y="1188" width="565" height="11.2" fill="#999999"/>
<path d="M724,1189.5 V1198.5" stroke="#8a8a8a" stroke-width="1.2"/>
</svg>
</div></body></html>
